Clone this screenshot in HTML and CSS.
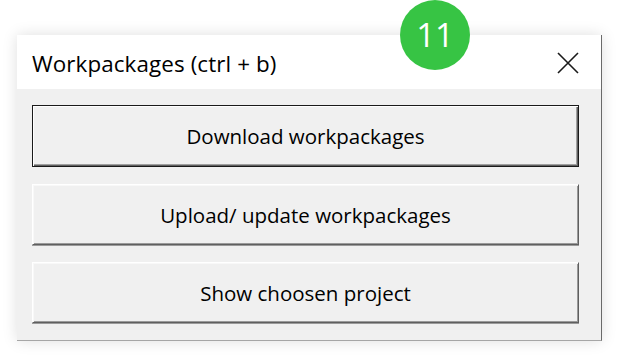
FILE: index.html
```html
<!DOCTYPE html>
<html>
<head>
<meta charset="utf-8">
<link rel="stylesheet" href="styles.css">
</head>
<body>
<div class="stage">
  <div class="window">
    <div class="titlebar">
      <span class="title">Workpackages (ctrl + b)</span>
      <svg class="close" width="22" height="22" viewBox="0 0 22 22"><path d="M1 1L21 21M21 1L1 21" stroke="#1a1a1a" stroke-width="1.6" fill="none"/></svg>
    </div>
    <div class="content">
      <button class="btn default">Download workpackages</button>
      <button class="btn">Upload/ update workpackages</button>
      <button class="btn">Show choosen project</button>
    </div>
  </div>
  <div class="badge">11</div>
</div>
</body>
</html>
```
FILE: styles.css
```css
html, body {
  margin: 0;
  padding: 0;
  background: #ffffff;
  font-family: "Open Sans", "Noto Sans", "Liberation Sans", sans-serif;
}
.stage {
  position: relative;
  width: 620px;
  height: 358px;
  padding: 35px 0 0 17px;
  box-sizing: border-box;
}
.window {
  width: 585px;
  height: 306px;
  box-sizing: border-box;
  border-right: 1px solid #6a6a6a;
  border-bottom: 1px solid #a6a6a6;
  box-shadow: 0 0 14px rgba(0, 0, 0, 0.13);
  display: flex;
  flex-direction: column;
  background: #f0f0f0;
}
.titlebar {
  height: 54px;
  background: #ffffff;
  display: flex;
  align-items: center;
  justify-content: space-between;
  padding: 0 22px 0 15px;
  flex-shrink: 0;
}
.title {
  font-size: 22.4px;
  letter-spacing: 0.1px;
  color: #000;
  padding-top: 2px;
}
.close {
  display: block;
  margin-top: 2px;
}
.content {
  display: flex;
  flex-direction: column;
  gap: 17px;
  padding: 16px 22px 0 15px;
}
.btn {
  height: 61px;
  width: 547px;
  font-family: inherit;
  font-size: 20.5px;
  color: #000;
  background: #f0f0f0;
  border: 1px solid;
  border-color: #ffffff #5f5f5f #5f5f5f #ffffff;
  box-shadow: inset 1px 1px 0 #f8f8f8, inset -1px -1px 0 #9a9a9a, 0 1px 0 #9a9a9a;
  padding: 0;
  margin: 0;
}
.btn.default {
  height: 62px;
  border: 1px solid #1a1a1a;
  box-shadow: inset 1px 1px 0 #ffffff, inset -1px -1px 0 #5f5f5f, inset -2px -2px 0 #a0a0a0;
}
.badge {
  position: absolute;
  left: 400px;
  top: 0;
  width: 70px;
  height: 70px;
  border-radius: 50%;
  background: #37c444;
  color: #ffffff;
  font-size: 33px;
  line-height: 70px;
  text-align: center;
}
```
